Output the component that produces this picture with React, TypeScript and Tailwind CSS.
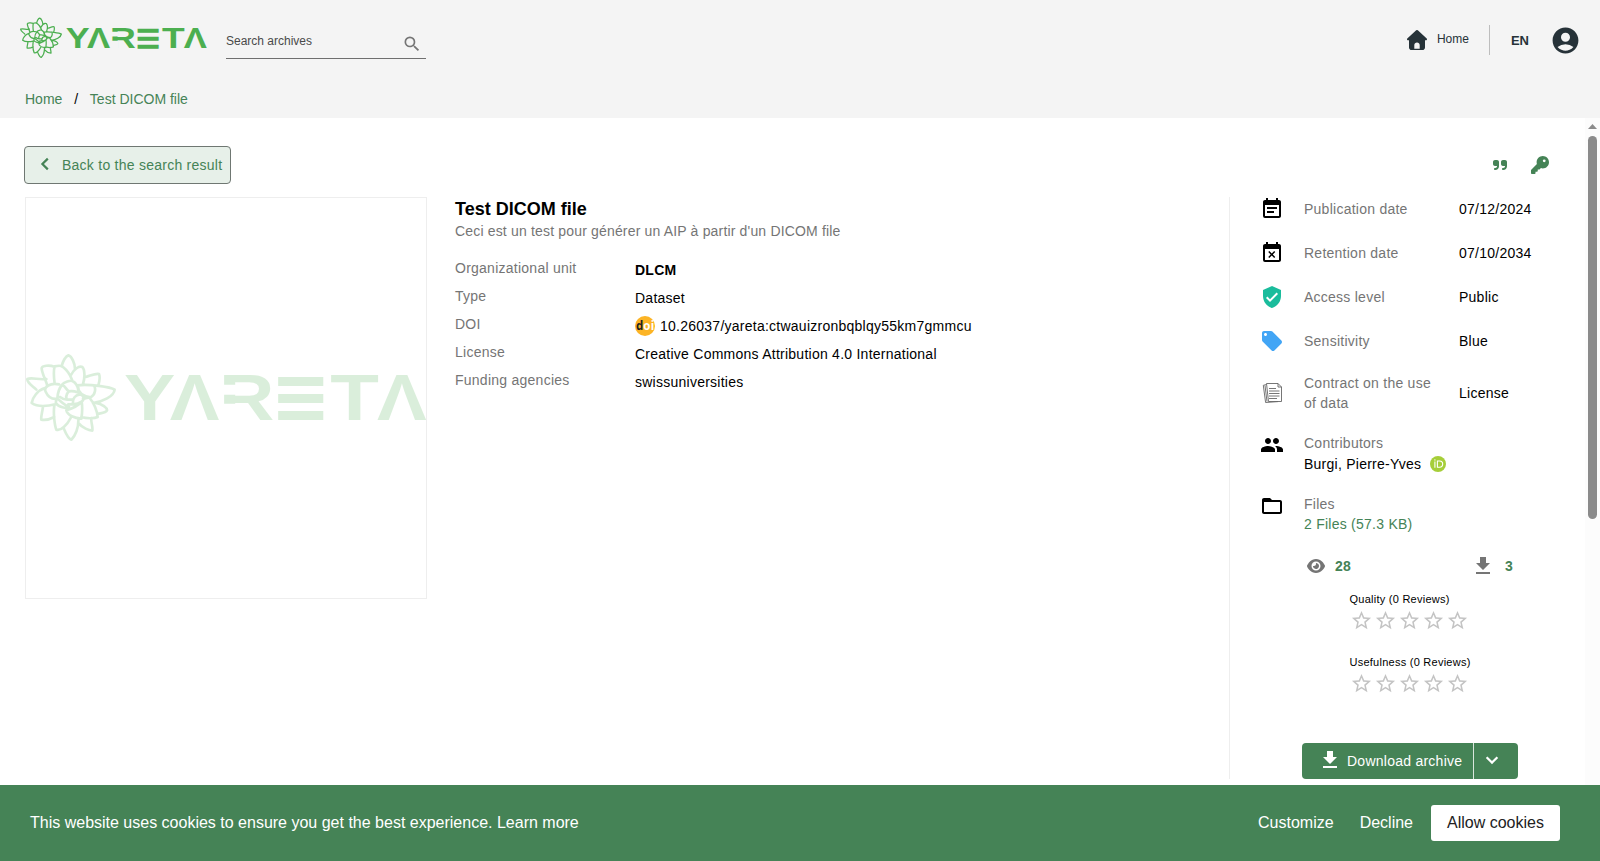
import type { ReactNode } from "react";
import { FaEye, FaKey, FaQuoteRight } from "react-icons/fa6";
import {
  MdAccountCircle,
  MdEventBusy,
  MdEventNote,
  MdFileDownload,
  MdFolderOpen,
  MdLocalOffer,
  MdPeople,
  MdSearch,
  MdStarBorder,
  MdVerifiedUser,
} from "react-icons/md";

const WORDMARK = [
  { char: "Y", x: 311, width: 154 },
  { char: "Λ", x: 448, width: 149 },
  { char: "R", x: 596, width: 166, clip: "url(#wordmark-r)" },
  { char: "≡", x: 751, width: 181, font: "DejaVu Sans", size: 236, y: 249 },
  { char: "T", x: 930, width: 146 },
  { char: "Λ", x: 1070, width: 149 },
];

const PETALS = [
  "M118 50C121 35 130 19 138 17C148 20 158 40 158 58",
  "M96 51C80 45 60 48 58 55C58 70 70 90 75 108",
  "M97 102C94 80 94 60 97 50C110 47 118 48 122 52C135 62 142 72 149 90",
  "M72 88C50 92 30 82 15 88C14 100 30 108 42 120",
  "M68 115C45 122 30 145 28 160C45 172 75 170 102 163",
  "M62 170C60 190 55 200 57 210C70 212 85 208 96 202",
  "M96 168C92 195 98 230 102 240C115 245 135 225 145 205",
  "M125 238C132 255 140 268 147 270C158 260 170 235 168 205",
  "M170 222C180 235 200 242 210 243C212 228 205 218 207 205",
  "M177 202C190 206 215 208 226 202C225 185 215 160 202 145",
  "M220 160C240 162 255 175 254 182C250 190 238 190 228 192",
  "M165 107C200 102 265 112 277 120C275 140 240 157 212 160",
  "M190 82C205 78 220 70 230 73C235 85 230 100 228 107",
  "M146 76C155 58 170 48 180 52C188 60 188 85 182 103",
  "M118 106C125 96 145 92 150 94C160 98 166 110 168 122",
  "M110 104C85 98 62 112 70 126C78 144 92 149 105 147",
  "M167 108C166 128 182 140 205 143C221 134 220 114 215 108",
  "M105 147C106 130 110 116 119 106C133 111 128 118 140 125C155 123 170 128 182 137",
  "M105 147C113 152 125 166 140 172C132 178 108 172 101 161C100 155 102 150 105 147",
  "M140 125C130 134 130 142 134 150C126 150 118 146 113 142M134 150L150 150",
  "M152 164C150 147 158 136 173 134C187 138 186 150 178 156C170 162 162 164 152 164H138",
  "M132 182C145 178 165 172 178 156C181 175 179 195 177 207C158 206 135 197 132 182",
  "M182 148C190 144 198 143 205 143",
];

const DETAILS = [
  { label: "Organizational unit", value: <strong>DLCM</strong> },
  { label: "Type", value: "Dataset" },
  {
    label: "DOI",
    value: (
      <>
        <DoiIcon />
        10.26037/yareta:ctwauizronbqblqy55km7gmmcu
      </>
    ),
  },
  { label: "License", value: "Creative Commons Attribution 4.0 International" },
  { label: "Funding agencies", value: "swissuniversities" },
];

const METADATA = [
  { icon: <MdEventNote size={24} />, label: "Publication date", value: "07/12/2024" },
  { icon: <MdEventBusy size={24} />, label: "Retention date", value: "07/10/2034" },
  { icon: <MdVerifiedUser size={24} className="text-[#1abc9c]" />, label: "Access level", value: "Public" },
  { icon: <MdLocalOffer size={24} className="text-[#42a5f5]" />, label: "Sensitivity", value: "Blue" },
  { icon: <ContractIcon />, label: "Contract on the use of data", value: "License" },
];

export default function App() {
  return (
    <div className="flex h-[861px] flex-col overflow-hidden bg-white font-['Liberation_Sans',Arial,sans-serif] text-sm text-black">
      <Header />
      <main className="flex min-h-0 flex-1">
        <div className="flex-1 pl-6 pt-7">
          <Toolbar />
          <div className="mt-[13px] flex pl-px">
            <section className="flex size-[402px] items-center border border-[#eeeeee]">
              <Logo className="h-[90px] w-[401px] shrink-0 text-[#4caf50] opacity-20" />
            </section>
            <Summary />
            <Sidebar />
          </div>
        </div>
        <Scrollbar />
      </main>
      <CookieBanner />
    </div>
  );
}

function Header() {
  return (
    <header className="h-[118px] shrink-0 bg-[#f4f4f4]">
      <div className="flex h-20 items-center pl-5 pr-[19px]">
        <Logo className="mb-1 h-[42px] w-[187px] text-[#4caf50]" />
        <div className="mb-[3px] ml-[19px] flex h-10 w-[200px] items-center justify-between border-b border-[#6f6f6f] pr-1 text-xs text-[#4a4a4a]">
          <span className="pt-1.5">Search archives</span>
          <MdSearch size={20} className="mt-3 text-[#757575]" />
        </div>
        <nav className="ml-auto flex items-center text-[#263238]">
          <HomeIcon />
          <span className="ml-2.5 pb-0.5 text-xs">Home</span>
          <span className="ml-5 h-[30px] w-px bg-[#bdbdbd]" />
          <span className="ml-[21px] mt-0.5 text-[13px] font-bold">EN</span>
          <MdAccountCircle size={31} className="ml-[21px]" />
        </nav>
      </div>
      <div className="flex gap-[11.8px] pl-[25px] pt-[9px] leading-5 text-[#458356]">
        <span>Home</span>
        <span className="text-black">/</span>
        <span>Test DICOM file</span>
      </div>
    </header>
  );
}

function Toolbar() {
  return (
    <div className="flex h-[38px] items-center justify-between pr-9">
      <button
        type="button"
        className="flex h-[38px] w-[207px] items-center rounded border border-[#6f7772] bg-[#e7f0e9] pl-2 tracking-[0.25px] text-[#458356]"
      >
        <Chevron className="mb-0.5 rotate-90" />
        <span className="ml-[5px] whitespace-nowrap">Back to the search result</span>
      </button>
      <div className="flex items-center gap-[23px] text-[#458356]">
        <FaQuoteRight size={16} />
        <FaKey size={18} />
      </div>
    </div>
  );
}

function Summary() {
  return (
    <section className="ml-7 flex-1">
      <h1 className="text-lg font-bold leading-6">Test DICOM file</h1>
      <p className="leading-5 tracking-[0.17px] text-[#757575]">Ceci est un test pour générer un AIP à partir d'un DICOM file</p>
      <dl className="mt-[17px] tracking-[0.25px]">
        {DETAILS.map((e) => (
          <div key={e.label} className="flex h-7">
            <dt className="w-[180px] leading-5 text-[#757575]">{e.label}</dt>
            <dd className="flex h-6 items-center">{e.value}</dd>
          </div>
        ))}
      </dl>
    </section>
  );
}

function Sidebar() {
  return (
    <aside className="h-[582px] w-[356px] border-l border-[#eeeeee] pl-[30px] leading-5 tracking-[0.25px]">
      <section className="flex flex-col gap-5">
        {METADATA.map((e) => (
          <div key={e.label} className="flex min-h-6 items-center">
            <span className="w-6">{e.icon}</span>
            <span className="ml-5 w-[135px] text-[#757575]">{e.label}</span>
            <span className="ml-5">{e.value}</span>
          </div>
        ))}
        <SidebarBlock icon={<MdPeople size={24} />} label="Contributors">
          <span className="flex h-[21px] items-center gap-[9px]">
            Burgi, Pierre-Yves
            <OrcidIcon />
          </span>
        </SidebarBlock>
        <SidebarBlock icon={<MdFolderOpen size={24} />} label="Files">
          <span className="block text-[#458356]">2 Files (57.3 KB)</span>
        </SidebarBlock>
      </section>

      <section className="mt-5 flex h-6 items-center pl-[47px] font-bold text-[#458356]">
        <FaEye size={18} className="text-[#757575]" />
        <span className="ml-2.5 w-[140px]">28</span>
        <MdFileDownload size={24} className="-ml-1 text-[#757575]" />
        <span className="ml-2.5">3</span>
      </section>

      <section className="mt-[11px] flex flex-col gap-5 pl-[89.5px]">
        <Rating label="Quality" />
        <Rating label="Usefulness" />
      </section>

      <section className="ml-[42px] mt-12 flex h-9 w-[216px] rounded bg-[#458356] text-white">
        <button type="button" className="flex w-[172px] items-center border-r border-white/80 pl-4">
          <MdFileDownload size={24} className="mb-0.5" />
          <span className="ml-[5px] whitespace-nowrap">Download archive</span>
        </button>
        <button type="button" className="flex flex-1 items-center pl-1.5">
          <Chevron className="mb-0.5" />
        </button>
      </section>
    </aside>
  );
}

const SidebarBlock = ({ icon, label, children }: { icon: ReactNode; label: string; children: ReactNode }) => (
  <div className="flex items-start">
    <span className="w-6">{icon}</span>
    <div className="ml-5">
      <p className="text-[#757575]">{label}</p>
      {children}
    </div>
  </div>
);

const Rating = ({ label }: { label: string }) => (
  <div>
    <p className="h-5 text-[11px]">{label} (0 Reviews)</p>
    <div className="flex gap-px text-[#c4c4c4]">
      {[1, 2, 3, 4, 5].map((star) => (
        <MdStarBorder key={star} size={23} />
      ))}
    </div>
  </div>
);

const Scrollbar = () => (
  <div className="flex w-[15px] flex-col items-center bg-[#fcfcfc] pt-1.5">
    <svg width="9" height="5" viewBox="0 0 9 5" fill="#8b8b8b">
      <path d="M4.5 0 9 5H0z" />
    </svg>
    <span className="mt-[7px] h-[383px] w-[9px] rounded-full bg-[#8b8b8b]" />
  </div>
);

const CookieBanner = () => (
  <footer className="flex h-[76px] shrink-0 items-center bg-[#458356] pl-[30px] pr-10 text-base text-white">
    <p>This website uses cookies to ensure you get the best experience. Learn more</p>
    <div className="ml-auto flex items-center">
      <button type="button">Customize</button>
      <button type="button" className="ml-[26px]">
        Decline
      </button>
      <button type="button" className="ml-[18px] h-9 w-[129px] rounded-[3px] bg-white text-[#222222]">
        Allow cookies
      </button>
    </div>
  </footer>
);

const Logo = ({ className }: { className: string }) => (
  <svg viewBox="17 40 1203 270" className={className} fill="currentColor" role="img" aria-label="Yareta">
    {/* the R of the wordmark has no stem */}
    <clipPath id="wordmark-r">
      <path d="M600 90H780V260H652V192H600V165H652V135H600z" />
    </clipPath>
    <g transform="translate(6 30)" fill="none" stroke="currentColor" strokeWidth="8" strokeLinejoin="round" strokeLinecap="round">
      <path d={PETALS.join("")} />
    </g>
    {WORDMARK.map((e) => (
      <text
        key={e.x}
        x={e.x}
        y={e.y ?? 242}
        textLength={e.width}
        lengthAdjust="spacingAndGlyphs"
        fontFamily={e.font ?? "Liberation Sans"}
        fontWeight="700"
        fontSize={e.size ?? 192}
        clipPath={e.clip}
      >
        {e.char}
      </text>
    ))}
  </svg>
);

const Chevron = ({ className }: { className: string }) => (
  <svg width="24" height="24" viewBox="0 0 24 24" className={className} fill="none" stroke="currentColor" strokeWidth="2.2">
    <path d="M6.600 9.200 12 14.600l5.400-5.400" />
  </svg>
);

const HomeIcon = () => (
  <svg width="20" height="20" viewBox="0 0 20 20" fill="currentColor">
    <path
      fillRule="evenodd"
      d="M8.900.5a1.600 1.600 0 0 1 2.200 0l8.600 8c.6.700.2 1.800-.7 1.800h-1v7.100c0 1.500-1.100 2.600-2.600 2.600H4.600C3.100 20 2 18.900 2 17.400v-7.100H1c-.9 0-1.300-1.100-.7-1.800zM7.300 18.800h5.400v-3.700c0-1.600-1.200-2.700-2.700-2.700s-2.700 1.100-2.700 2.700z"
    />
  </svg>
);

function DoiIcon() {
  return (
    <svg width="20" height="20" viewBox="0 0 20 20" className="mr-[5px]">
      <circle cx="10" cy="10" r="10" fill="#fcb425" />
      <text y="14" fontFamily="Open Sans" fontWeight="700" fontSize="11.5">
        <tspan x="1" fill="#231f20">
          d
        </tspan>
        <tspan x="8.300" fill="#ffffff">
          oi
        </tspan>
      </text>
    </svg>
  );
}

function ContractIcon() {
  return (
    <svg width="24" height="24" viewBox="0 0 24 24" fill="none" stroke="#666666" strokeWidth="0.9">
      <path d="M6.500 2.500h11.500l3.500 3.500v14.500h-13z M18 2.500v3.500h3.500" />
      <path d="M6.500 3.500l-3.200.8 2.300 17.200 12.500-.9M5 4.500l2 16" />
      <path d="M9 7.500h7M9 10h10.500M9 12.500h10.500M9 15h10.500M9 17.500h8" />
    </svg>
  );
}

const OrcidIcon = () => (
  <svg width="16" height="16" viewBox="0 0 16 16">
    <circle cx="8" cy="8" r="8" fill="#a6ce39" />
    <path d="M4.900 5.500v6.200M7.400 5v6.200h2.200a3.100 3.100 0 0 0 0-6.200z" fill="none" stroke="#ffffff" strokeWidth="1.100" />
    <circle cx="4.900" cy="3.900" r="0.700" fill="#ffffff" />
  </svg>
);
